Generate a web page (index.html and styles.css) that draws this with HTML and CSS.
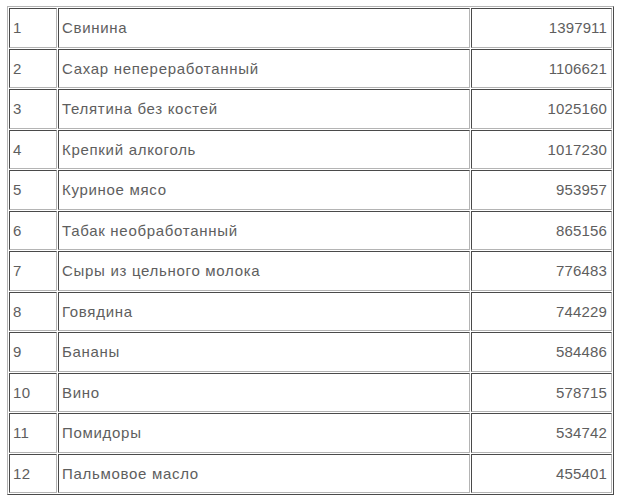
FILE: index.html
```html
<!DOCTYPE html>
<html>
<head>
<meta charset="utf-8">
<link rel="stylesheet" href="styles.css">
</head>
<body>
<table class="data">
<tbody>
<tr><td class="num">1</td><td class="name">Свинина</td><td class="val">1397911</td></tr>
<tr><td class="num">2</td><td class="name">Сахар непереработанный</td><td class="val">1106621</td></tr>
<tr><td class="num">3</td><td class="name">Телятина без костей</td><td class="val">1025160</td></tr>
<tr><td class="num">4</td><td class="name">Крепкий алкоголь</td><td class="val">1017230</td></tr>
<tr><td class="num">5</td><td class="name">Куриное мясо</td><td class="val">953957</td></tr>
<tr><td class="num">6</td><td class="name">Табак необработанный</td><td class="val">865156</td></tr>
<tr><td class="num">7</td><td class="name">Сыры из цельного молока</td><td class="val">776483</td></tr>
<tr><td class="num">8</td><td class="name">Говядина</td><td class="val">744229</td></tr>
<tr><td class="num">9</td><td class="name">Бананы</td><td class="val">584486</td></tr>
<tr><td class="num">10</td><td class="name">Вино</td><td class="val">578715</td></tr>
<tr><td class="num">11</td><td class="name">Помидоры</td><td class="val">534742</td></tr>
<tr><td class="num">12</td><td class="name">Пальмовое масло</td><td class="val">455401</td></tr>
</tbody>
</table>
</body>
</html>
```
FILE: styles.css
```css
html, body {
  margin: 0;
  padding: 0;
  background: #fff;
}
body {
  padding: 6px 0 0 7px;
  font-family: "Liberation Sans", Arial, sans-serif;
}
.data {
  border-collapse: separate;
  border-spacing: 1px;
  width: 607px;
  border: 1px solid;
  border-color: #b4b4b4 #4a4a4a #4a4a4a #b4b4b4;
  table-layout: fixed;
}
.data td {
  box-sizing: border-box;
  height: 39.5px;
  border: 1px solid;
  border-color: #4a4a4a #b4b4b4 #b4b4b4 #4a4a4a;
  font-size: 15px;
  color: #5e5e5e;
  padding: 0 3px;
  vertical-align: middle;
  white-space: nowrap;
}
.data td.num { width: 48px; letter-spacing: 0.3px; }
.data td.name { width: 412px; letter-spacing: 0.7px; }
.data td.val { width: 141px; text-align: right; padding-right: 4px; letter-spacing: 0.15px; }
```
